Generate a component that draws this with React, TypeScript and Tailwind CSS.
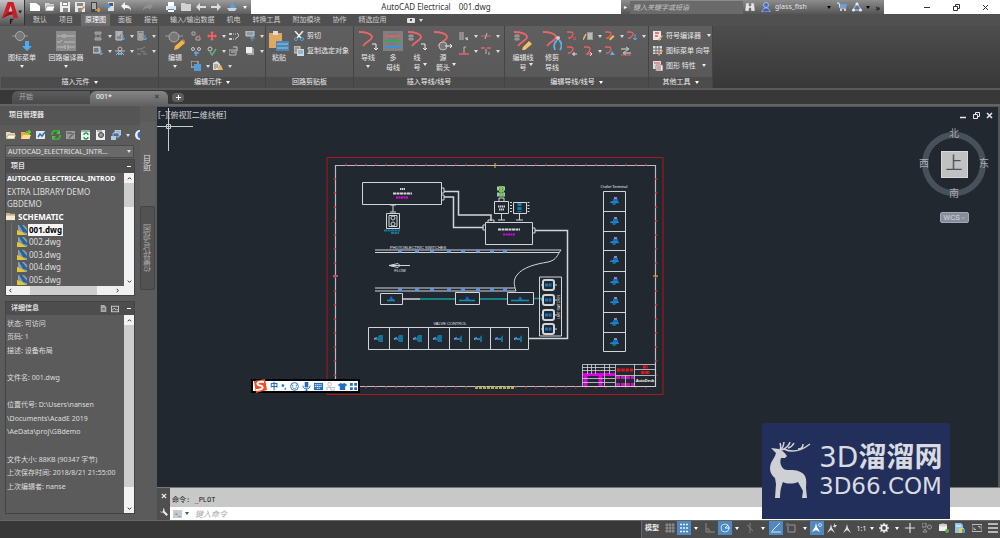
import { useState } from 'react'
import type { ReactNode } from 'react'

const MENU_TABS = [
  '默认', '项目', '原理图', '面板', '报告', '输入/输出数据',
  '机电', '转换工具', '附加模块', '协作', '精选应用',
]

const DRAWINGS = ['001.dwg', '002.dwg', '003.dwg', '004.dwg', '005.dwg']

const DETAILS = [
  '状态: 可访问',
  '页码: 1',
  '描述: 设备布局',
  '',
  '文件名: 001.dwg',
  '',
  '位置代号: D:\\Users\\nansen',
  '\\Documents\\AcadE 2019',
  '\\AeData\\proj\\GBdemo',
  '',
  '文件大小: 88KB (90347 字节)',
  '上次保存时间: 2018/8/21 21:55:00',
  '上次编辑者: nanse',
]

// 10x10 glyphs
const GLYPHS: Record<string, ReactNode> = {
  new: <path d="M0 1h6l4 3v5H0z" fill="#fff" />,
  open: <><path d="M0 1h4l1 1h4v7H0z" fill="#d5d5d5" /><path d="M2 4h8L8 9H0z" fill="#fff" stroke="#666" strokeWidth=".6" /></>,
  save: <><path d="M0 0h10v10H0z" fill="#eee" /><path d="M2 0h6v4H2zM3 6h5v4H3z" fill="#8a8a8a" /><path d="M3 1h4v2H3z" fill="#fff" /></>,
  saveAs: <><path d="M0 0h10v10H0z" fill="#e5e5e5" /><path d="M2 1h6v3H2zM3 6h4v4H3z" fill="#888" /><path d="M5 8l4-4 1 1-4 4z" fill="#d9853b" /></>,
  sheet: <><path d="M1 0h6v10H1z" fill="#444" /><path d="M2 1h4v6H2z" fill="#aaa" /><path d="M5 8h5M8 6l2 2-2 2" stroke="#e0a04a" strokeWidth="1.5" fill="none" /></>,
  sheetBlue: <><path d="M3 0h6v9H3z" fill="#ddd" /><path d="M4 1h4v3H4z" fill="#555" /><path d="M0 4h5M3 2l2 2-2 2" stroke="#3b9adf" strokeWidth="1.5" fill="none" /></>,
  undo: <path d="M0 4l4-4v3c4 0 6 2 6 6-1-3-3-3-6-3v2z" fill="#f2f2f2" />,
  redo: <path d="M10 4L6 0v3C2 3 0 5 0 9c1-3 3-3 6-3v2z" fill="#909090" />,
  print: <><path d="M2 0h6v4H2zM2 7h6v3H2z" fill="#fff" /><path d="M0 4h10v4H0z" fill="#dfe7ee" /><path d="M2 7h6v1H2z" fill="#3b8ccc" /></>,
  folder: <path d="M0 1h4l1 1h5v7H0z" fill="#d2d2d2" />,
  left: <path d="M0 5l4-4v3h6v2H4v3z" fill="#ddd" />,
  right: <path d="M10 5L6 1v3H0v2h6v3z" fill="#ddd" />,
  boat: <><path d="M5 0l4 6H3z" fill="#5ba2d8" /><path d="M0 6h10L8 9H2z" fill="#c8d6e0" /></>,
  relay: <><path d="M2 1h6v2H2zM2 7h6v2H2z" fill="#8d8d8d" stroke="#a5a5a5" /><path d="M3 3h4v4H3z" fill="none" stroke="#999" /></>,
  plcDown: <><path d="M1 0h6v9H1z" fill="#888" stroke="#ccc" /><path d="M2 2h4M2 4h3" stroke="#ddd" /><path d="M8 4v5M6 7l2 2 2-2" stroke="#58b0ee" fill="none" /></>,
  listDown: <><path d="M1 0h5v9H1z" fill="#777" stroke="#bbb" /><path d="M2 3h3M2 5h3M2 7h3" stroke="#ccc" /><path d="M8 4v5M6 7l2 2 2-2" stroke="#58b0ee" fill="none" /></>,
  panelDown: <><path d="M0 1h7v6H0z" fill="#9a9a9a" stroke="#ccc" /><path d="M2 2v4M4 2v4" stroke="#555" /><path d="M8 4v5M6 7l2 2 2-2" stroke="#58b0ee" fill="none" /></>,
  person: <><circle cx="5" cy="3" r="2" fill="none" stroke="#bbb" /><path d="M0 5h10M1 9l4-4 4 4" stroke="#bbb" fill="none" /><path d="M3 8h4" stroke="#58b0ee" strokeWidth="2" /></>,
  switchOff: <path d="M0 3h4l4-2M0 8h4M6 8h4M4 5l4 1" stroke="#888" fill="none" />,
  dots: <><path d="M1 1h3v3H1zM5 6h4v3H5z" fill="none" stroke="#aaa" /><path d="M6 4l3 3M9 4L6 7" stroke="#ef5b5b" /></>,
  moveRed: <path d="M5 0l2 2H6v2h2V3l2 2-2 2V6H6v2h1l-2 2-2-2h1V6H2v1L0 5l2-2v1h2V2H3z" fill="#ef5f62" />,
  align: <><path d="M0 2h3v2H0zM0 7h3v2H0z" fill="#ccc" /><path d="M4 3h4M4 8h4" stroke="#ccc" strokeDasharray="1 1" /><path d="M8 2c3 2 1 5-1 5" stroke="#ddd" fill="none" /></>,
  sheetSwap: <><path d="M1 0h8v5H1z" fill="#999" stroke="#ccc" /><path d="M3 3h5M5 7h5M7 5v5" stroke="#58a5e0" /></>,
  linkBlue: <><circle cx="2" cy="3" r="1.5" fill="none" stroke="#ccc" /><circle cx="8" cy="3" r="1.5" fill="none" stroke="#ccc" /><path d="M3 7h5M5 5v5" stroke="#5aaef0" strokeWidth="1.5" /></>,
  check: <><circle cx="3" cy="3" r="2" fill="none" stroke="#ccc" /><path d="M3 6l2 3 4-6" stroke="#5bb474" strokeWidth="1.5" fill="none" /></>,
  rotate: <><path d="M0 4h7v5H0z" fill="none" stroke="#bbb" /><path d="M4 1h4v4M2 6h4" stroke="#ccc" fill="none" /></>,
  cube: <><path d="M1 1h6v6H1z" fill="#eee" /><path d="M7 1l2 2v6H3L1 7h6z" fill="#a5a5a5" /></>,
  copyBlue: <><path d="M0 0h7v6H0z" fill="#555" stroke="#ccc" /><path d="M3 3h7v7H3z" fill="#579cd8" /></>,
  hand: <><path d="M0 2l4-2 3 3v6H0z" fill="#ddd" /><path d="M5 5l3-1 2 5H5z" fill="#e5b565" /><path d="M2 3v5M4 3v4" stroke="#777" /></>,
  cut: <><path d="M1 0l6 7M9 0L3 7" stroke="#eee" strokeWidth="1.5" /><circle cx="2" cy="8" r="1.5" fill="none" stroke="#58a5e0" /><circle cx="8" cy="8" r="1.5" fill="none" stroke="#58a5e0" /></>,
  copy: <><path d="M0 0h6v7H0z" fill="#999" stroke="#ccc" /><path d="M3 3h7v7H3z" fill="#d8d8d8" /><path d="M4 5h5M4 7h5" stroke="#4c97d2" /></>,
  ladder: <><path d="M0 1h5v8H0z" fill="#7b7b7b" /><path d="M1 1v8M4 1v8M1 2h3M1 4h3M1 6h3M1 8h3" stroke="#999" /><path d="M6 7l3 2M8 6v3" stroke="#ddd" /></>,
  wireGap: <><path d="M0 5h10" stroke="#e06467" /><path d="M6 2L4 8" stroke="#bbb" /></>,
  wireUp: <><path d="M0 8h10" stroke="#ef5f62" strokeWidth="1.5" /><path d="M5 7V1h2" stroke="#bbb" fill="none" /></>,
  wireT: <><path d="M0 2h4M6 2h4" stroke="#ef5f62" strokeWidth="1.5" /><path d="M5 3v5M8 6v3" stroke="#bbb" /></>,
  wireX: <><path d="M0 1h3c4 0 4 3 0 6H1" fill="none" stroke="#ef5f62" strokeWidth="1.3" /><path d="M6 6l3 3M9 6L6 9" stroke="#ff4a4a" /></>,
  wirePlus: <><path d="M0 1h3c4 0 4 3 0 6H1" fill="none" stroke="#ef5f62" strokeWidth="1.3" /><path d="M7 6v4M5 8h5" stroke="#ddd" /></>,
  wireArrow: <><path d="M1 1h3c4 0 4 3 0 7h5" fill="none" stroke="#ef5f62" strokeWidth="1.3" /><path d="M7 6l2 2-2 2" stroke="#ddd" fill="none" /></>,
  wirePen: <><path d="M0 1h3c4 0 4 3 0 6H1" fill="none" stroke="#ef5f62" strokeWidth="1.3" /><path d="M4 8l4-4 1.500 1.500-4 4z" fill="#efbb55" /></>,
  wireDrop: <><path d="M0 1h3c4 0 4 3 0 6H1" fill="none" stroke="#ef5f62" strokeWidth="1.3" /><path d="M8 3v6M6 7l2 2 2-2" stroke="#5ab0ee" fill="none" /></>,
  wireTri: <><path d="M0 1h3c4 0 4 3 0 6H1" fill="none" stroke="#ef5f62" strokeWidth="1.3" /><path d="M5 9l2-4 3 4z" fill="#5ab0ee" /></>,
  building: <><path d="M4 1h6v8H4z" fill="#999" /><path d="M5 3h4M5 5h4M5 7h4" stroke="#ddd" /><path d="M0 9l3-6" stroke="#efb655" strokeWidth="1.5" /></>,
  swapH: <><path d="M0 3h7M3 7h7" stroke="#ddd" /><path d="M5 1l3 2-3 2M5 5L2 7l3 2" stroke="#ccc" fill="none" /><path d="M0 9h10" stroke="#ef5f62" /></>,
  symbolEdit: <><path d="M0 0h8v9H0z" fill="#e6e6e6" /><path d="M2 2h4M2 5h3" stroke="#e0584f" strokeWidth="1.5" /><path d="M5 9l4-5 1 1-4 5z" fill="#e9a04b" /></>,
  menuEdit: <><path d="M0 0h9v8H0z" fill="#ddd" /><path d="M3 0v8M6 0v8M0 3h9M0 6h9" stroke="#666" /><path d="M5 9l4-5 1 1-4 5z" fill="#e9a04b" /></>,
  props: <><path d="M0 0h8v8H0z" fill="#ddd" /><path d="M1 2h6" stroke="#d94d4d" /><path d="M3 4h7v6H3z" fill="#f3f3f3" stroke="#888" /><path d="M4 6h4M4 8h4" stroke="#c44" /></>,
  openProject: <><path d="M0 2h4l1 1h4v6H0z" fill="#e8d7b0" /><path d="M2 5h8L8 9H0z" fill="#fff4d9" stroke="#7a6a4b" strokeWidth=".5" /></>,
  newProject: <><path d="M0 2h4l1 1h4v6H0z" fill="#f0a846" /><path d="M2 5h8L8 9H0z" fill="#fbdc9a" /><path d="M8 0v5M5 2h5" stroke="#5bd32f" strokeWidth="1.500" /></>,
  newDrawing: <><path d="M0 1h9v8H0z" fill="#dce8f2" /><path d="M2 7l2-3 2 2 3-4" stroke="#3f6c9b" strokeWidth="1.5" fill="none" /></>,
  refresh: <><path d="M1 5a4 4 0 0 1 7-3M9 5a4 4 0 0 1-7 3" stroke="#3cae35" strokeWidth="2" fill="none" /><path d="M9 0v4H5zM1 10V6h4z" fill="#4fc43f" /></>,
  taskGray: <><path d="M0 1h9v8H0z" fill="#9c9c9c" /><path d="M1 3h5M3 8l5-5" stroke="#666" strokeWidth="1.5" /></>,
  update: <><path d="M0 0h9v10H0z" fill="#e9f3ec" /><path d="M0 1h9" stroke="#69a585" strokeWidth="1.5" /><path d="M3 5a2 2 0 0 1 4 0M7 7a2 2 0 0 1-4 0" stroke="#2a9655" fill="none" strokeWidth="1.3" /></>,
  zoomDoc: <><path d="M0 0h9v10H0z" fill="#eee" /><circle cx="5" cy="5" r="2.500" fill="#999" stroke="#444" /><path d="M1 1h5" stroke="#777" /></>,
  publish: <><path d="M4 0h6v5H4z" fill="#8ab5dc" stroke="#eee" strokeWidth=".6" /><path d="M2 3h6v4H2z" fill="#3c6e9e" stroke="#eee" strokeWidth=".6" /><path d="M0 6h5v4H0z" fill="#aaccea" /></>,
  help: <><circle cx="5" cy="5" r="5" fill="#e8f0fa" /><circle cx="6" cy="5" r="3.500" fill="#3a70b8" /></>,
  dwg: <><path d="M1 0h6l3 3v7H1z" fill="#8f9da8" /><path d="M2 0h3l5 6v2L6 7z" fill="#24639c" /><path d="M0 5l5 2 4 3H0z" fill="#e6c52f" /></>,
  catFolder: <><path d="M0 1h4l1 1h5v7H0z" fill="#c9b285" /><path d="M0 4h10v5H0z" fill="#f4ead0" /></>,
  page: <><path d="M1 0h5l3 3v7H1z" fill="#aaa" /><path d="M3 5h4M3 7h4" stroke="#555" /></>,
  image: <><path d="M0 1h10v8H0z" fill="#ddd" /><path d="M1 2h8v6H1z" fill="#555" /><path d="M1 7l3-3 2 2 1-1 2 2" stroke="#ddd" fill="none" /></>,
  binoculars: <path d="M1 1h3v3h2V1h3l1 8H6V6H4v3H0z" fill="#e5e5e5" stroke="#777" strokeWidth=".4" />,
  user: <><circle cx="5" cy="3" r="2.500" fill="#4a6fc8" stroke="#c5d2f3" strokeWidth=".7" /><path d="M1 10c0-2 1-3 3-4h2c2 1 3 2 3 4z" fill="#3a5fc0" stroke="#c5d2f3" strokeWidth=".7" /></>,
  cart: <><path d="M0 1h2l1 5h6" stroke="#eee" fill="none" /><path d="M3 2h7L9 6H3z" fill="#6f9fd6" /><circle cx="4" cy="8" r="1" fill="#eee" /><circle cx="8" cy="8" r="1" fill="#eee" /></>,
  a360: <><path d="M5 1l4 7H1z" fill="none" stroke="#8fb0e6" strokeWidth="1.300" /><circle cx="5" cy="2" r="1.500" fill="#e5edfa" /><circle cx="1.500" cy="8" r="1.500" fill="#e5edfa" /><circle cx="8.500" cy="8" r="1.500" fill="#e5edfa" /></>,
  grid: <path d="M2 0v10M5 0v10M8 0v10M0 2h10M0 5h10M0 8h10" stroke="#a5a5a5" strokeWidth=".8" />,
  snap: <path d="M1 1.500h2M4 1.500h2M7 1.500h2M1 5h2M4 5h2M7 5h2M1 8.500h2M4 8.500h2M7 8.500h2" stroke="#e8f3fc" strokeWidth="1.600" />,
  ortho: <path d="M1 0v9h9M1 6h3v3" stroke="#8b8b8b" fill="none" />,
  polar: <><circle cx="5" cy="5" r="4" fill="none" stroke="#b9dcf5" /><path d="M5 5h5M5 5l3-3" stroke="#e5f3fd" /></>,
  iso: <path d="M5 0v10M2 2l6 6" stroke="#808080" fill="none" />,
  track: <path d="M0 9h10M1 8l8-8" stroke="#d4e9f8" fill="none" />,
  osnap: <><path d="M2 2h7v7H2z" fill="none" stroke="#999" /><path d="M0 0h3v3H0z" fill="#6d6d6d" /></>,
  annot: <><path d="M4 0l1 4 3 5-4-2-4 2 3-5z" fill="#fff" /><circle cx="8" cy="2" r="1.500" fill="none" stroke="#dceaf7" strokeWidth=".8" /></>,
  annotAuto: <><path d="M4 1l1 4 3 5-4-3-4 3 3-5z" fill="#ddd" /><path d="M8 0L6 4h2L7 6l3-4H8z" fill="#ddd" /></>,
  annotPlain: <path d="M5 1l1 4 3 5-4-3-4 3 3-5z" fill="#ddd" />,
  gear: <><circle cx="5" cy="5" r="2.800" fill="none" stroke="#eee" strokeWidth="1.800" /><path d="M5 0v2M5 8v2M0 5h2M8 5h2M1.500 1.500l1.500 1.500M7 7l1.500 1.500M8.500 1.500L7 3M3 7L1.500 8.500" stroke="#eee" strokeWidth="1.300" /></>,
  plus: <path d="M5 0v10M0 5h10" stroke="#ddd" strokeWidth="1.200" />,
  objects: <><path d="M0 0h4v4H0z" fill="none" stroke="#999" /><circle cx="7.500" cy="4" r="2" fill="none" stroke="#999" /><path d="M3 6l2 3H1z" fill="none" stroke="#999" /></>,
  drum: <><path d="M0 2h8v6H0z" fill="#f0f0f0" /><ellipse cx="4" cy="2" rx="4" ry="1.500" fill="#cfcfcf" /><circle cx="8" cy="8" r="2" fill="#52b356" /></>,
  publishDoc: <><path d="M0 0h6l2 2v8H0z" fill="#8ec3e4" /><path d="M1 3h5" stroke="#fff" /><path d="M4 5h5v5H4z" fill="#e7cf58" /><path d="M7 6h3v4H7z" fill="#4b9fe0" /></>,
  screen: <><path d="M0 1.500h10v7H0z" fill="none" stroke="#bbb" /><path d="M6 3.500h2v2M4 6.500H2v-2" stroke="#bbb" fill="none" /></>,
  menu: <path d="M0 1h10M0 5h10M0 9h10" stroke="#ddd" strokeWidth="1.300" />,
}

function Glyph({ name, className = 'size-[10px]' }: { name: string; className?: string }) {
  return (
    <svg viewBox="0 0 10 10" className={`${className} shrink-0`} aria-hidden="true">
      {GLYPHS[name]}
    </svg>
  )
}

function Caret({ className = 'text-[#dcdcdc]' }: { className?: string }) {
  return (
    <svg viewBox="0 0 4 3" className={`h-[3px] w-[4px] shrink-0 ${className}`} aria-hidden="true">
      <path d="M0 0h4L2 3z" fill="currentColor" />
    </svg>
  )
}

function IconButton({ name, label, className = '' }: { name: string; label: string; className?: string }) {
  return (
    <button aria-label={label} className={`flex items-center justify-center ${className}`}>
      <Glyph name={name} />
    </button>
  )
}

/* ---------- title bar ---------- */

const QUICK_ACCESS: [string, string, string][] = [
  ['new', '新建', 'ml-[5px]'], ['open', '打开', 'ml-[5px]'], ['save', '保存', 'ml-[5px]'],
  ['saveAs', '另存为', 'ml-[5px]'], ['sheet', '上一个图形', 'ml-[5px]'], ['sheetBlue', '下一个图形', 'ml-[5px]'],
  ['undo', '放弃', 'ml-[6px]'], ['redo', '重做', 'ml-[12px]'], ['print', '打印', 'ml-[13px]'],
  ['folder', '项目管理器', 'ml-[5px]'], ['left', '上一个', 'ml-[5px]'], ['right', '下一个', 'ml-[5px]'],
  ['boat', '浏览器', 'ml-[6px]'],
]

function TitleBar() {
  return (
    <div className="flex h-[14px] bg-white">
      <div className="flex w-[226px] shrink-0 items-center bg-gradient-to-b from-[#9b9b9b] to-[#5d5d5d]">
        {QUICK_ACCESS.map(([name, label, gap]) => (
          <IconButton key={name} name={name} label={label} className={gap} />
        ))}
        <Caret className="ml-auto mr-[4px] text-white" />
      </div>
      <h1 className="flex flex-1 items-center justify-center gap-[8px] text-[8px] leading-[14px] text-[#333]">
        <span>AutoCAD Electrical</span>
        <span>001.dwg</span>
      </h1>
      <div className="flex w-[263px] shrink-0 items-center bg-gradient-to-b from-[#8d8d8d] to-[#565656]">
        <button aria-label="展开搜索" className="flex w-[9px] justify-center text-[6px] text-white">▸</button>
        <input
          aria-label="搜索"
          placeholder="键入关键字或短语"
          className="h-[13px] w-[113px] bg-[#6a6a6a] px-[3px] text-[7px] italic text-white placeholder:text-[#c4c4c4]"
        />
        <IconButton name="binoculars" label="查找" className="ml-[2px]" />
        <IconButton name="user" label="用户" className="ml-[6px]" />
        <button className="ml-[4px] text-[7px] text-[#e5e5e5]">glass_fish</button>
        <Caret className="ml-auto mr-[6px]" />
        <IconButton name="cart" label="商店" />
        <IconButton name="a360" label="A360" className="ml-[5px]" />
        <Caret className="ml-[4px]" />
        <button aria-label="更多" className="ml-[5px] mr-[4px] text-[9px] leading-none text-black">»</button>
      </div>
      <div className="flex w-[116px] shrink-0 items-center justify-end gap-[22px] pr-[11px] text-[#333]">
        <button aria-label="最小化"><svg viewBox="0 0 7 7" className="size-[7px]"><path d="M0 3.500h6" stroke="currentColor" /></svg></button>
        <button aria-label="还原"><svg viewBox="0 0 7 7" className="size-[7px]"><path d="M.5 2.500h4v4h-4zM2.500 2V.5h4v4H5" fill="none" stroke="currentColor" /></svg></button>
        <button aria-label="关闭"><svg viewBox="0 0 7 7" className="size-[7px]"><path d="M1 1l5 5M6 1L1 6" stroke="currentColor" /></svg></button>
      </div>
    </div>
  )
}

function MenuTabs() {
  const [active, setActive] = useState('原理图')
  return (
    <nav className="flex h-[12px] items-stretch gap-1 bg-[#505050] pl-[4px] text-[7px] leading-[12px]">
      {MENU_TABS.map(tab => (
        <button
          key={tab}
          onClick={() => setActive(tab)}
          className={`whitespace-nowrap px-1 ${tab === active ? 'bg-[#6c6c6c] text-white' : 'text-[#cfcfcf]'}`}
        >
          {tab}
        </button>
      ))}
      <button aria-label="最小化功能区" className="ml-[12px] flex items-center gap-[4px]">
        <span className="flex h-[5px] w-[8px] items-center justify-center rounded-[1px] bg-[#e2e2e2]">
          <span className="size-[2px] bg-[#555]" />
        </span>
        <Caret />
      </button>
    </nav>
  )
}

/* ---------- ribbon ---------- */

function Panel({ title, more = false, className, children }: { title: string; more?: boolean; className: string; children: ReactNode }) {
  return (
    <section className={`flex shrink-0 flex-col border-r border-[#444] bg-gradient-to-b from-[#5f5f5f] to-[#585858] ${className}`}>
      <div className="flex flex-1 items-start pt-[5px]">{children}</div>
      <h2 className="flex h-[11px] items-center justify-center gap-[4px] bg-[#4c4c4c] text-[7px] text-[#eee]">
        {title}
        {more && <Caret className="text-white" />}
      </h2>
    </section>
  )
}

function BigButton({ lines, icon, caret, className, boxed = false }: { lines: string[]; icon: ReactNode; caret?: 'below' | 'side'; className: string; boxed?: boolean }) {
  return (
    <button className={`flex shrink-0 flex-col items-center text-[7px] leading-[10px] text-[#eaeaea] ${className}`}>
      <svg viewBox="0 0 20 20" className={`mb-[2px] size-[20px] ${boxed ? 'bg-[#808080]' : ''}`} aria-hidden="true">{icon}</svg>
      {lines.map((line, i) => (
        <span key={line} className="relative whitespace-nowrap">
          {line}
          {caret === 'side' && i === lines.length - 1 && <Caret className="absolute left-full top-0 ml-[2px]" />}
        </span>
      ))}
      {caret === 'below' && <Caret className="mt-[2px]" />}
    </button>
  )
}

// each cell: glyph name, with a trailing "+" when it opens a drop-down
function ToolRows({ rows, className }: { rows: string[][]; className: string }) {
  return (
    <div className={`flex shrink-0 flex-col ${className}`}>
      {rows.map((row, i) => (
        <div key={i} className="flex h-[15px] items-start">
          {row.map(cell => {
            const drop = cell.endsWith('+')
            const name = cell.replace('+', '')
            return (
              <button key={name} aria-label={name} className={`flex items-center ${drop ? 'w-[22px] gap-[5px]' : 'w-[16px]'}`}>
                <Glyph name={name} />
                {drop && <Caret />}
              </button>
            )
          })}
        </div>
      ))}
    </div>
  )
}

function LabelledTools({ items, className }: { items: [string, string, boolean][]; className: string }) {
  return (
    <div className={`flex flex-col ${className}`}>
      {items.map(([name, label, drop]) => (
        <button key={name} className="flex h-[15px] items-start gap-[3px] whitespace-nowrap text-[7px] leading-[10px] text-[#eaeaea]">
          <Glyph name={name} />
          {label}
          {drop && <Caret className="ml-[3px] mt-[3px]" />}
        </button>
      ))}
    </div>
  )
}

const wireCurve = <path d="M1 1c7 0 13 2 13 5s-5 4-9 9" fill="none" stroke="#ee6568" strokeWidth="1.800" />

function Ribbon() {
  return (
    <div className="flex h-[62px] bg-gradient-to-b from-[#4d4d4d] to-[#383838]">
      <Panel title="插入元件" more className="w-[159px] pl-[1px]">
        <BigButton
          className="ml-[6px] w-[30px]"
          lines={['图标菜单']}
          caret="below"
          icon={<><path d="M0 5h16" stroke="#999" /><circle cx="8" cy="5" r="4.500" fill="#777" stroke="#aaa" /><path d="M13 10h4v5h3l-5 5-5-5h3z" fill="#4aaef4" /></>}
        />
        <BigButton
          className="ml-[10px] w-[38px]"
          lines={['回路编译器']}
          caret="below"
          icon={<><path d="M0 0h20v20H0z" fill="#8b8b8b" /><path d="M1 5h6M9 5h10M1 11h3l2-2M8 11h11M1 16h8M12 16h7M7 3v4M9 3v4M9 14v4M12 14v4" stroke="#bbb" fill="none" /></>}
        />
        <ToolRows className="ml-[8px]" rows={[['relay+', 'plcDown+', 'listDown+'], ['panelDown+', 'person+', 'switchOff+']]} />
      </Panel>

      <Panel title="编辑元件" more className="w-[107px]">
        <BigButton
          className="ml-[4px] w-[24px]"
          lines={['编辑']}
          caret="below"
          icon={<><path d="M0 5h18" stroke="#999" /><circle cx="9" cy="6" r="5" fill="#777" stroke="#aaa" /><path d="M9 19l1-4 7-6 3 3-7 6z" fill="#f2b648" /><path d="M17 9l3 3 1-1-3-3z" fill="#ef6d6d" /></>}
        />
        <div className="ml-[4px]">
          <div className="flex">
            <ToolRows className="w-[38px]" rows={[['dots', 'moveRed+'], ['linkBlue', 'check+']]} />
            <ToolRows className="" rows={[['align', 'sheetSwap+'], ['rotate', 'cube+']]} />
          </div>
          <ToolRows className="" rows={[['copyBlue+', 'hand+']]} />
        </div>
      </Panel>

      <Panel title="回路剪贴板" className="w-[88px]">
        <BigButton
          className="ml-[3px] w-[20px]"
          lines={['粘贴']}
          icon={<><path d="M0 2h13v15H0z" fill="#dfa964" /><path d="M4 0h5v4H4z" fill="#ddd" /><path d="M7 10h13v10H7z" fill="#4987b8" /><path d="M8 13h11M8 17h11" stroke="#9cc6e8" /></>}
        />
        <LabelledTools className="ml-[5px]" items={[['cut', '剪切', false], ['copy', '复制选定对象', false]]} />
      </Panel>

      <Panel title="插入导线/线号" className="w-[151px]">
        <BigButton className="ml-[4px] w-[20px]" lines={['导线']} caret="below" icon={<>{wireCurve}<path d="M14 13h4v6M16 17l2 2 2-2" stroke="#eee" fill="none" /></>} />
        <BigButton
          className="ml-[5px] w-[20px]"
          lines={['多', '母线']}
          boxed
          icon={<><path d="M2 5h16" stroke="#d86262" strokeWidth="2" /><path d="M2 10h16" stroke="#3aa35c" strokeWidth="2" /><path d="M2 16h16" stroke="#3b8fd6" strokeWidth="2" /><path d="M5 3h10M5 8h10M5 13h10" stroke="#777" /></>}
        />
        <BigButton className="ml-[4px] w-[20px]" lines={['线', '号']} caret="side" icon={<>{wireCurve}<path d="M1 5h6M1 8h6M3 3v7M5 3v7" stroke="#bbb" strokeWidth=".7" /><path d="M14 13h4v6M16 17l2 2 2-2" stroke="#eee" fill="none" /></>} />
        <BigButton className="ml-[6px] w-[20px]" lines={['源', '箭头']} caret="side" icon={<>{wireCurve}<circle cx="10" cy="15" r="4" fill="#777" stroke="#bbb" /><path d="M12 15h7M17 13l2 2-2 2" stroke="#eee" fill="none" /></>} />
        <ToolRows className="ml-[6px]" rows={[['ladder+', 'wireGap+'], ['wireUp+', 'wireT+']]} />
      </Panel>

      <Panel title="编辑导线/线号" more className="w-[144px]">
        <BigButton className="ml-[7px] w-[22px]" lines={['编辑线', '号']} caret="side" icon={<>{wireCurve}<path d="M1 5h6M1 8h6M3 3v7M5 3v7" stroke="#bbb" strokeWidth=".7" /><path d="M9 19l1-3 6-6 3 3-7 6z" fill="#f2c26a" /></>} />
        <BigButton className="ml-[7px] w-[22px]" lines={['修剪', '导线']} icon={<>{wireCurve}<circle cx="16" cy="7" r="2" fill="#ccc" /><path d="M15 9c-4 4-3 7-2 10M17 9c4 4 3 7 1 10" stroke="#5ab0ee" strokeWidth="1.800" fill="none" /></>} />
        <ToolRows
          className="ml-[4px]"
          rows={[['wireX', 'building+', 'wirePen+', 'wireDrop+'], ['wirePlus', 'wireArrow+', 'wireTri', 'swapH']]}
        />
      </Panel>

      <Panel title="其他工具" more className="w-[64px]">
        <LabelledTools
          className="ml-[4px]"
          items={[['symbolEdit', '符号编译器', true], ['menuEdit', '图标菜单 向导', false], ['props', '图形 特性', true]]}
        />
      </Panel>
    </div>
  )
}

function FileTabs() {
  return (
    <div className="flex h-[18px] items-end border-b-2 border-t-2 border-b-[#636363] border-t-[#5a5a5a] bg-[#383838] pl-[12px] text-[7px]">
      <button className="h-[13px] w-[78px] rounded-tl-[6px] bg-gradient-to-b from-[#5c5c5c] to-[#4a4a4a] pl-[7px] text-left text-[#aaa]">开始</button>
      <div className="flex h-[13px] w-[78px] items-center rounded-t-[6px] bg-gradient-to-b from-[#858585] to-[#656565] pl-[6px] pr-[8px] text-white">
        <button>001*</button>
        <button aria-label="关闭 001" className="ml-auto text-[#333]">✕</button>
      </div>
      <button aria-label="新图形" className="mb-[2px] ml-[4px] flex h-[9px] w-[12px] items-center justify-center rounded-[4px] bg-[#5d5d5d]">
        <svg viewBox="0 0 5 5" className="size-[5px]"><path d="M2.500 0v5M0 2.500h5" stroke="#fff" /></svg>
      </button>
    </div>
  )
}

/* ---------- project manager ---------- */

const PROJECT_TOOLS: [string, string][] = [
  ['openProject', '打开项目'], ['newProject', '新建项目'], ['newDrawing', '新建图形'], ['refresh', '刷新'],
  ['taskGray', '项目任务列表'], ['update', '更新标记'], ['zoomDoc', '图形列表'], ['publish', '发布'],
]

function Chevron({ d }: { d: string }) {
  return (
    <svg viewBox="0 0 6 6" className="size-[5px]" aria-hidden="true">
      <path d={d} fill="none" stroke="#333" strokeWidth="1.200" />
    </svg>
  )
}

function VScroll({ thumb }: { thumb: string }) {
  return (
    <div className="flex w-[10px] shrink-0 flex-col items-center bg-[#f3f3f3]">
      <button aria-label="向上滚动" className="flex h-[10px] items-center"><Chevron d="M1 4l2-2 2 2" /></button>
      <div className={`w-full bg-[#cdcdcd] ${thumb}`} />
      <button aria-label="向下滚动" className="mt-auto flex h-[10px] items-center"><Chevron d="M1 2l2 2 2-2" /></button>
    </div>
  )
}

function ProjectManager() {
  const [selected, setSelected] = useState('001.dwg')
  return (
    <aside className="flex w-[157px] shrink-0 bg-[#5b5b5b] text-[#dedede]">
      <div className="flex w-[140px] flex-col">
        <h2 className="h-[19px] bg-[#555] pl-[9px] text-[7px] font-bold leading-[18px]">项目管理器</h2>
        <div className="flex h-[20px] items-center gap-[5px] overflow-hidden pl-[6px]">
          {PROJECT_TOOLS.map(([name, label]) => <IconButton key={name} name={name} label={label} />)}
          <Caret />
          <IconButton name="help" label="帮助" />
        </div>
        <div className="relative mb-[1px] ml-[5px] w-[129px]">
          <select
            aria-label="项目"
            className="block h-[13px] w-full appearance-none border border-[#4a4a4a] bg-[#696969] px-[2px] text-[7px] leading-[11px] text-[#e4e4e4]"
          >
            <option>AUTOCAD_ELECTRICAL_INTR...</option>
          </select>
          <Caret className="pointer-events-none absolute right-[3px] top-[5px]" />
        </div>

        <section className="ml-[5px] flex w-[130px] flex-col border border-[#444]">
          <h3 className="flex h-[13px] items-center justify-between bg-[#4d4d4d] pl-[5px] pr-[3px] text-[7px] font-bold">
            项目
            <button aria-label="折叠项目" className="h-[1px] w-[4px] bg-white" />
          </h3>
          <div className="flex h-[113px]">
            <ul className="flex min-w-0 flex-1 flex-col text-[8px] leading-[12px] *:flex *:flex-1 *:items-center *:whitespace-nowrap">
              <li className="pl-[1px] text-[7px] font-bold text-white">AUTOCAD_ELECTRICAL_INTROD</li>
              <li className="pl-[1px]">EXTRA LIBRARY DEMO</li>
              <li className="pl-[1px]">GBDEMO</li>
              <li className="gap-[3px] font-bold text-white"><Glyph name="catFolder" className="size-[9px]" />SCHEMATIC</li>
              {DRAWINGS.map(name => (
                <li key={name} className="ml-[5px] gap-[1px] border-l border-[#6e6e6e] pl-[5px]">
                  <Glyph name="dwg" />
                  <button
                    onClick={() => setSelected(name)}
                    className={`px-[1px] ${name === selected ? 'bg-[#f4f4f4] font-bold text-black' : ''}`}
                  >
                    {name}
                  </button>
                </li>
              ))}
            </ul>
            <VScroll thumb="h-[24px]" />
          </div>
          <div className="flex h-[9px] items-center bg-[#f0f0f0] px-[2px]">
            <button aria-label="向左滚动"><Chevron d="M4 1L2 3l2 2" /></button>
            <div className="ml-[17px] h-full w-[67px] bg-[#cdcdcd]" />
            <button aria-label="向右滚动" className="ml-auto mr-[12px]"><Chevron d="M2 1l2 2-2 2" /></button>
          </div>
        </section>

        <section className="mb-[6px] ml-[5px] mt-[5px] flex w-[130px] flex-1 flex-col border border-[#444]">
          <h3 className="flex h-[13px] items-center gap-[4px] bg-[#4d4d4d] pl-[5px] pr-[3px] text-[7px] font-bold">
            <span className="mr-auto">详细信息</span>
            <Glyph name="page" className="size-[7px]" />
            <Glyph name="image" className="size-[8px]" />
            <button aria-label="折叠详细信息" className="ml-[4px] h-[1px] w-[4px] bg-white" />
          </h3>
          <div className="flex flex-1">
            <div className="flex flex-1 flex-col pb-[19px] pl-[1px] pt-[2px] text-[7px]">
              {DETAILS.map((line, i) => (
                <p key={i} className="flex flex-1 items-center whitespace-nowrap">{line}</p>
              ))}
            </div>
            <VScroll thumb="h-[162px]" />
          </div>
        </section>
      </div>

      <div className="flex w-[15px] flex-col text-[8px] leading-[14px]">
        <button className="mt-[16px] flex h-[84px] rotate-180 items-center justify-center bg-[#5f5f5f] pt-[2px] [writing-mode:vertical-rl]">项目</button>
        <button className="flex h-[84px] rotate-180 items-center justify-center rounded-[2px] border border-[#444] bg-[#525252] text-[#aaa] [writing-mode:vertical-rl]">位置代号视图</button>
      </div>
    </aside>
  )
}

/* ---------- drawing area ---------- */

const SENSOR_X = [400, 417, 432, 449, 463, 478, 492, 505]
const VALVE_X = [369, 389, 408, 428, 449, 469, 490, 509, 529]
const OUTLET_Y = [191, 211, 231, 250, 271, 291, 312, 332, 351]
const LIMIT_Y = [285, 300, 315, 329]

function Terminal({ x, y }: { x: number; y: number }) {
  return (
    <g stroke="none">
      <path d={`M${x} ${y - 4}h3v2h-3z`} fill="#7f93a8" />
      <path d={`M${x - 1} ${y - 2}h5v3h-5z`} fill="#1c63c9" />
      <path d={`M${x - 4} ${y + 1}l2-1h5l2 1v1h-9z`} fill="#1784c4" />
      <path d={`M${x - 2} ${y + 2}h5l-2 2h-2z`} fill="#127292" />
    </g>
  )
}

function Valve({ x, wide }: { x: number; wide: boolean }) {
  return (
    <g stroke="none">
      <path d={`M${x + 5} 338l3-1v2l-3 1z`} fill="#8c8fc8" />
      <path d={`M${x + 7} 338h5v2h-5z`} fill="#1a86b8" />
      <path d={wide ? `M${x + 10} 335h4v7h-4l-2-3z` : `M${x + 13} 335v7h-2v-5z`} fill="#14719a" />
    </g>
  )
}

function SchematicDrawing() {
  return (
    <svg
      viewBox="157 107 841 380"
      preserveAspectRatio="xMidYMid meet"
      className="h-full w-full font-['Liberation_Sans_Narrow','Liberation_Sans',sans-serif]"
      role="img"
      aria-label="设备布局"
      fill="none"
      stroke="#d3d6d9"
    >
      {/* crosshair */}
      <path d="M157 126.500h36M168.500 108v43M166.500 124.500h4v4h-4z" stroke="#c9ccce" />

      {/* sheet border and zone marks */}
      <path d="M327 157.500h336v237h-336z" stroke="#b0151b" />
      <path d="M335.500 165.500h320v221h-320z" strokeWidth="1.200" stroke="#b9bdc1" />
      <path d="M345 164.500h305M345 387.500h305" stroke="#d01823" strokeWidth="2" strokeDasharray="1.500 8.500" />
      <path d="M334.500 178v200M656.500 178v200" stroke="#b81a22" strokeWidth="2" strokeDasharray="2 12" />
      <path d="M495 163v5M653 276h5" stroke="#d7c827" />
      <path d="M333 276h5" stroke="#c05050" strokeWidth="2" />
      <path d="M475 388h40" stroke="#b5b522" strokeWidth="2" strokeDasharray="3 1" />

      {/* cabinet */}
      <path d="M362.500 182.500h79v22h-79z" />
      <path d="M400 189h5" strokeDasharray="1.500 .5" strokeWidth="2" />
      <path d="M393 193.500h19" strokeDasharray="3 .5" strokeWidth="2" />
      <path d="M396 197.500h12" stroke="#f000f0" strokeWidth="2" strokeDasharray="2 .5" />
      <path d="M442 188h2v5h-2M442 195h2v5h-2" />
      <path d="M444 191.500h14.500v23.500h32.500v6M444 197h9.500v30.500h30" strokeWidth="1.500" />
      <path d="M390 205h6M393 205v7M390 212h6M386.500 213.500h13v15h-13zM389 215.500h8v11h-8z" />
      <circle cx="393" cy="218" r="2" />
      <circle cx="393" cy="224" r="2" />
      <path d="M384 230.500h16M391 233h8" stroke="#18779a" strokeWidth="2" strokeDasharray="3 .5" />

      {/* operator panel */}
      <path d="M485.500 222.500h47v22h-47z" />
      <path d="M498 229.500h22" strokeDasharray="3 .5" strokeWidth="2" />
      <path d="M503 234.500h12" stroke="#d800e0" strokeWidth="2" strokeDasharray="2 .5" />
      <path d="M485 225h-2v5h2M533 228h2v5h-2M488 222v-2h6v2M498 220h7M501.500 214v6M516 220h7M519.500 214v6" />
      <path d="M535 230.500h32.500v108h-38.500" strokeWidth="1.500" />
      <path d="M494.500 201.500h14v12h-14zM513.500 202.500h13v11h-13z" />
      <path d="M498 206.500h7M499 209.500h5" strokeWidth="2" strokeDasharray="1.500 .5" />
      <path d="M511 202v12M528.500 202v12" strokeWidth="2" strokeDasharray="1 2" />
      <path d="M519.500 203v9" stroke="#147fae" strokeWidth="4" strokeDasharray="3 1" />
      <path d="M497 188.500h9M497 194.500h9" stroke="#a5c4c4" strokeWidth="4" strokeDasharray="2 1" />
      <path d="M501.500 186v11" stroke="#76c35a" strokeWidth="5" strokeDasharray="3 .5" />
      <path d="M499 201v-3h5v3" />

      {/* conveyor */}
      <text x="390" y="249" fontSize="4" fill="#e6e8ea" stroke="none">PHOTOELECTRIC SWITCHES</text>
      <path d="M375 250h186M375 252.500h184M375 288h140M375 291h141" />
      {SENSOR_X.map(x => <path key={x} d={`M${x - 2} 251h4M${x - 2} 289.500h4`} stroke="#5f93dc" strokeWidth="3" />)}
      <path d="M561 250c-4 5-4 10-13 12-12 2-25 5-31 13-4 5-3 10-1 16" />
      <path d="M389 265.500h21M389 265.500l9-2 2 2-2 2z" />
      <text x="400" y="272" fontSize="4" fill="#e6e8ea" stroke="none" textAnchor="middle">FLOW</text>

      {/* motors */}
      <path d="M403 299h17" strokeWidth="1.500" />
      <path d="M420 299h36M480 299h27M534 298.500h8" stroke="#109f9d" strokeWidth="1.500" />
      <path d="M380.500 293.500h22v11h-22zM455.500 292.500h24v12h-24zM507.500 292.500h26v12h-26z" />
      <path d="M387 300.500h8M459 300.500h16M511 300.500h18" stroke="#148eb0" strokeWidth="1.500" />
      <path d="M389 300l2-4 3 4zM465 300l2-4 3 4zM518 300l2-4 3 4z" fill="#1c63c9" stroke="none" />

      {/* limit switches */}
      <path d="M539.500 277h22v59h-22z" />
      {LIMIT_Y.map(y => (
        <g key={y}>
          <path d={`M541 ${y}h16`} />
          <rect x="543" y={y - 5} width="11" height="10" rx="2" fill="#212830" strokeWidth="2" />
          <path d={`M545 ${y}h7`} stroke="#1673c2" strokeWidth="3" strokeDasharray="3 .5" />
        </g>
      ))}
      <text transform="translate(560 319) rotate(-90)" fontSize="3" fill="#e6e8ea" stroke="none">LIMIT SWITCHES</text>

      {/* valves */}
      <text x="450" y="325" fontSize="4" fill="#e6e8ea" stroke="none" textAnchor="middle">VALVE CONTROL</text>
      <path d="M368.500 327.500h160v22h-160z" />
      {VALVE_X.slice(1, -1).map(x => <path key={x} d={`M${x + 0.5} 327v22`} />)}
      {VALVE_X.slice(0, -1).map((x, i) => <Valve key={x} x={x} wide={i < 4} />)}

      {/* outlet terminals */}
      <text x="614" y="188" fontSize="4" fill="#e6e8ea" stroke="none" textAnchor="middle">Outlet Terminal</text>
      <path d="M603.500 191.500h22v160h-22z" />
      {OUTLET_Y.slice(1, -1).map(y => <path key={y} d={`M603 ${y + 0.5}h22`} />)}
      {OUTLET_Y.slice(0, -1).map(y => <Terminal key={y} x={614} y={y + 10} />)}

      {/* title block */}
      <path d="M583 374.500h32" stroke="#e000e6" strokeWidth="3" />
      <path d="M585.500 374v12M600.500 374v12" stroke="#e000e6" strokeWidth="4" />
      <path d="M616 377.500h18M616 384.500h18" stroke="#c218b4" strokeWidth="3" strokeDasharray="4 1" />
      <path d="M582.500 364.500h73v22h-73zM615.500 364v22M634.500 364v22M634 369.500h21M582 367.500h33M582 370.500h33M582 378.500h33M582 382.500h33M587.500 364v10M591.500 364v10M595.500 364v10M604.500 364v22M609.500 364v10M616 375.500h39M625.500 375v11" strokeWidth=".8" />
      <path d="M617 370h16M641 372.500h9M643 367h5" stroke="#e3141c" strokeWidth="3" strokeDasharray="3.500 .8" />
      <text x="645" y="382" fontSize="4" fontWeight="bold" fill="#fff" stroke="none" textAnchor="middle">AutoDesk</text>
    </svg>
  )
}

function ViewCube() {
  return (
    <div className="absolute right-[9px] top-[22px] flex flex-col items-center font-['Liberation_Serif','Noto_Sans_CJK_SC',serif] text-[10px] leading-none text-[#a9adb2]">
      <div className="relative flex size-[70px] items-center justify-center">
        <div className="absolute inset-[3px] rounded-full border-[6px] border-[#48505a]" />
        <button className="absolute left-[30px] top-0">北</button>
        <button className="absolute left-0 top-[30px]">西</button>
        <button className="absolute right-0 top-[30px]">东</button>
        <button className="absolute bottom-0 left-[30px]">南</button>
        <button className="relative size-[27px] border border-[#d8d8d8] bg-[#bfc1c3] text-[17px] leading-[22px] text-[#50545a]">上</button>
      </div>
      <button className="mt-[13px] h-[11px] w-[29px] rounded-[2px] border border-[#a3a8b4] bg-[#868d9b] font-['Liberation_Sans'] text-[7px] leading-[9px] text-[#d4d7df]">WCS ▫</button>
    </div>
  )
}

function InputMethodBar() {
  return (
    <div className="absolute left-[94px] top-[272px] flex h-[14px] w-[109px] items-center gap-[3px] border-2 border-black bg-white text-[#1e6fc4]">
      <svg viewBox="0 0 14 14" className="size-[14px] shrink-0" aria-hidden="true">
        <path d="M1 2l11-2 2 11-11 3z" fill="#ee4e22" />
        <path d="M11 3C3 2 3 6 7 6.500S11 11 3 11" stroke="#fff" strokeWidth="2" fill="none" />
      </svg>
      <button className="w-[8px] shrink-0 text-[8px] font-bold leading-none">中</button>
      <button className="w-[6px] shrink-0 text-[8px] font-bold leading-none">•,</button>
      <svg viewBox="0 0 10 10" className="size-[9px] shrink-0"><circle cx="5" cy="5" r="4.300" fill="none" stroke="currentColor" /><path d="M3 3v2M7 3v2M3 6c1 2 3 2 4 0" stroke="currentColor" fill="none" /></svg>
      <svg viewBox="0 0 10 10" className="size-[9px] shrink-0"><path d="M3 0h4v6H3z" fill="currentColor" /><path d="M1 4c0 5 8 5 8 0M5 7v3M3 10h4" stroke="currentColor" fill="none" /></svg>
      <svg viewBox="0 0 10 10" className="size-[9px] shrink-0"><path d="M0 1h10v8H0z" fill="currentColor" /><path d="M1 3h8M1 5h8M3 7h4" stroke="#fff" strokeDasharray="1.500 .5" /></svg>
      <svg viewBox="0 0 10 10" className="size-[9px] shrink-0 text-[#aab4be]"><circle cx="4" cy="2.500" r="2" fill="none" stroke="currentColor" /><path d="M1 9V6h5M5 9h5V6H6z" fill="none" stroke="currentColor" /></svg>
      <svg viewBox="0 0 10 10" className="size-[9px] shrink-0"><path d="M3 1l2 1 2-1 3 2-1 2-1-1v5H2V4L1 5 0 3z" fill="currentColor" /></svg>
      <svg viewBox="0 0 10 10" className="size-[7px] shrink-0"><path d="M0 0h4v4H0zM6 0h4v4H6zM0 6h4v4H0zM6 6h4v4H6z" fill="currentColor" /></svg>
    </div>
  )
}

function Watermark() {
  return (
    <div className="absolute bottom-[1px] right-[50px] flex h-[96px] w-[188px] items-center bg-[#222f5b] pl-[6px] text-[#d9dbe0]">
      <svg viewBox="0 0 44 58" className="h-[58px] w-[44px] shrink-0" aria-hidden="true">
        <path
          d="M3 6l8 1c3 1 5 3 8 7l-2 2-4 0c-1 3-1 6 1 9 2 3 4 3 8 3 6 0 12 1 15 6 2 4 1 8 1 12l1 10h-5l1-7-5-9c-5 2-11 2-15 0-2 5-3 9-3 16H7l1-14-1-6c-5-4-6-9-4-15 2-4 4-6 5-10z"
          fill="#cfd0d3"
        />
        <path d="M12 8c1-2 1-4 0-7M13 8c2-3 3-5 3-8M14 8c4-2 7-4 8-8M16 7c8 4 17 2 26-5M20 6c4-1 5-3 6-5M30 7c3 0 5-2 5-5" stroke="#cfd0d3" strokeWidth="1.500" fill="none" />
      </svg>
      <div className="mb-[6px] ml-[7px] whitespace-nowrap">
        <p className="font-['DejaVu_Sans','Noto_Sans_CJK_SC',sans-serif] text-[28px] leading-[34px]">3D<span className="font-['Noto_Sans_CJK_SC',sans-serif] font-bold">溜溜网</span></p>
        <p className="font-['DejaVu_Sans',sans-serif] text-[23px] leading-[23px]">3D66.COM</p>
      </div>
    </div>
  )
}

function CommandLine() {
  return (
    <div className="flex h-[33px] border-t border-[#777]">
      <div className="flex w-[13px] flex-col items-center justify-around bg-[#4f4f4f]">
        <button aria-label="关闭命令行"><svg viewBox="0 0 7 7" className="size-[6px]"><path d="M1 1l5 5M6 1L1 6" stroke="#eee" strokeWidth="1.500" /></svg></button>
        <button aria-label="自定义"><svg viewBox="0 0 10 10" className="size-[8px]"><path d="M4 4l5 5" stroke="#eee" strokeWidth="2.500" /><path d="M4 0a3 3 0 1 1-4 4l2 1 2-1V2z" fill="#eee" /></svg></button>
      </div>
      <div className="flex flex-1 flex-col">
        <p className="h-[19px] bg-[#c8c8c8] pl-[2px] font-['DejaVu_Sans_Mono','Noto_Sans_CJK_SC',monospace] text-[7px] leading-[24px] text-[#222]">命令: _PLOT</p>
        <div className="flex flex-1 items-center bg-white pl-[3px]">
          <span className="flex h-[8px] w-[9px] items-center justify-center bg-[#c6ccd4] text-[6px] leading-none text-[#444]">&gt;_</span>
          <Caret className="ml-[3px] text-[#555]" />
          <input
            aria-label="命令"
            placeholder="键入命令"
            className="ml-[6px] w-[200px] text-[8px] italic leading-[12px] outline-none placeholder:text-[#aaa]"
          />
        </div>
      </div>
    </div>
  )
}

function Workspace() {
  return (
    <main className="relative flex min-w-0 flex-1 flex-col bg-[#212830]">
      <div className="relative min-h-0 flex-1 border-r-2 border-t border-[#555]">
        <SchematicDrawing />
        <button className="absolute left-[1px] top-[3px] text-[8px] leading-[10px] text-[#d5d5d5]">[−][俯视][二维线框]</button>
        <div className="absolute right-[5px] top-[5px] flex items-center gap-[6px] text-[#e8e8e8]">
          <button aria-label="最小化图形"><svg viewBox="0 0 7 7" className="size-[7px]"><path d="M0 5.500h6" stroke="currentColor" strokeWidth="1.500" /></svg></button>
          <button aria-label="还原图形"><svg viewBox="0 0 7 7" className="size-[7px]"><path d="M.5 2.500h4v4h-4zM2.500 2V.5h4v4H5" fill="none" stroke="currentColor" /></svg></button>
          <button aria-label="关闭图形"><svg viewBox="0 0 7 7" className="size-[7px]"><path d="M1 1l5 5M6 1L1 6" stroke="currentColor" strokeWidth="1.500" /></svg></button>
        </div>
        <ViewCube />
        <InputMethodBar />
      </div>
      <CommandLine />
      <Watermark />
    </main>
  )
}

/* ---------- status bar ---------- */

const STATUS_ITEMS: { icon: string; w: string; on?: boolean }[] = [
  { icon: 'grid', w: 'w-[15px]' },
  { icon: 'snap', w: 'w-[14px]', on: true },
  { icon: 'caret', w: 'w-[10px]' },
  { icon: 'ortho', w: 'w-[17px]' },
  { icon: 'polar', w: 'w-[14px]', on: true },
  { icon: 'caret', w: 'w-[10px]' },
  { icon: 'iso', w: 'w-[15px]' },
  { icon: 'caret', w: 'w-[12px]' },
  { icon: 'track', w: 'w-[14px]', on: true },
  { icon: 'osnap', w: 'w-[16px]' },
  { icon: 'caret', w: 'w-[11px]' },
  { icon: 'annot', w: 'w-[14px]', on: true },
  { icon: 'annotAuto', w: 'w-[15px]' },
  { icon: 'annotPlain', w: 'w-[16px]' },
  { icon: '1:1', w: 'w-[13px]' },
  { icon: 'caret', w: 'w-[7px]' },
  { icon: 'gear', w: 'w-[17px]' },
  { icon: 'caret', w: 'w-[10px]' },
  { icon: 'plus', w: 'w-[15px]' },
  { icon: 'objects', w: 'w-[19px]' },
  { icon: 'drum', w: 'w-[15px]' },
  { icon: 'publishDoc', w: 'w-[17px]' },
  { icon: 'screen', w: 'w-[17px]' },
  { icon: 'menu', w: 'w-[15px]' },
]

function StatusBar() {
  return (
    <footer className="flex h-[18px] justify-end border-t border-[#666] bg-[#383838]">
      <div className="flex items-start border-l border-[#6a6a6a] bg-[#4b4b4b]">
        <button className="h-[14px] w-[20px] text-[7px] font-bold text-[#eee]">模型</button>
        {STATUS_ITEMS.map(({ icon, w, on }, i) => (
          <button
            key={i}
            aria-label={icon}
            className={`flex h-[14px] items-center justify-center ${w} ${on ? 'bg-[#5089bf]' : ''}`}
          >
            {icon === 'caret' && <Caret className="text-white" />}
            {icon === '1:1' && <span className="text-[7px] leading-none text-[#eee]">1:1</span>}
            {icon !== 'caret' && icon !== '1:1' && <Glyph name={icon} />}
          </button>
        ))}
      </div>
    </footer>
  )
}

export default function App() {
  return (
    <div className="flex h-screen flex-col overflow-hidden bg-[#383838] font-['Noto_Sans','Noto_Sans_CJK_SC',sans-serif]">
      <header className="flex shrink-0 bg-[#505050]">
        <button aria-label="应用程序菜单" className="flex h-[25px] w-[25px] shrink-0 items-center border-r border-[#333] bg-gradient-to-b from-[#c4c4c4] to-[#555]">
          <svg viewBox="0 0 25 25" className="size-[24px]" aria-hidden="true">
            <path d="M2 18L8 1h6l5 17h-5l-1-4H9l-3 3z" fill="#c8202a" />
            <path d="M9 11l2-6 2 6z" fill="#eebfbf" />
            <path d="M2 18l4-2 6-2 2-3-5 1z" fill="#8f1118" />
            <path d="M11 19h3M11 21h2M11 19v5" stroke="#111" />
            <path d="M19 10h4l-2 3z" fill="#222" />
          </svg>
        </button>
        <div className="min-w-0 flex-1">
          <TitleBar />
          <MenuTabs />
        </div>
      </header>
      <Ribbon />
      <FileTabs />
      <div className="flex min-h-0 flex-1">
        <ProjectManager />
        <Workspace />
      </div>
      <StatusBar />
    </div>
  )
}
